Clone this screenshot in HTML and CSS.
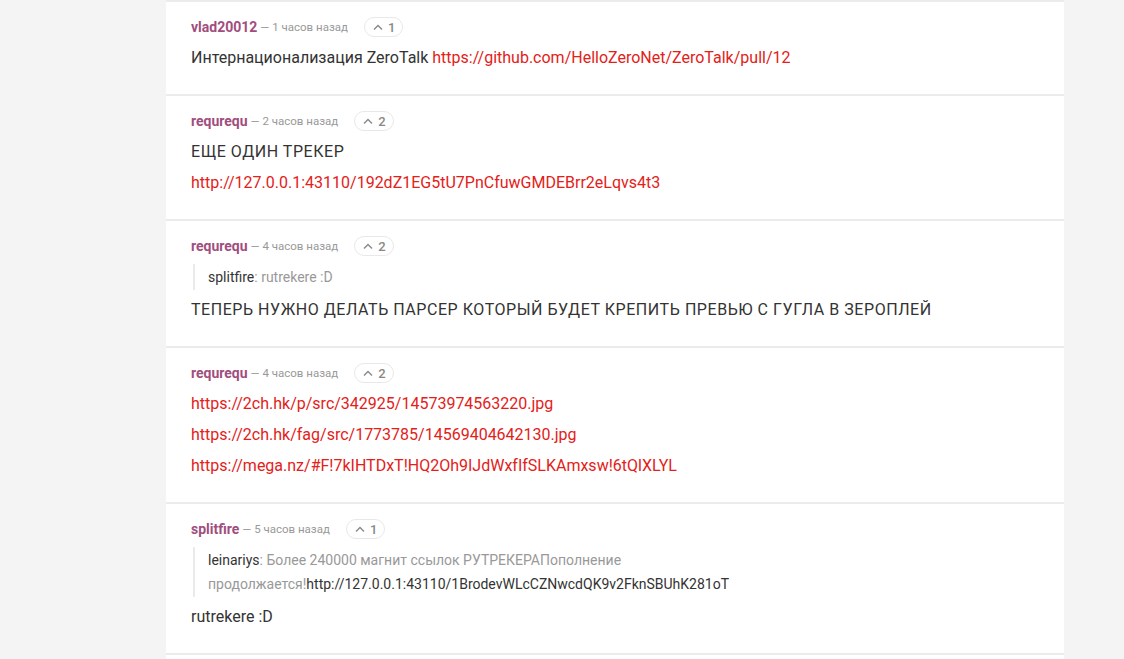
FILE: index.html
```html
<!DOCTYPE html>
<html lang="ru">
<head>
<meta charset="utf-8">
<title>ZeroTalk</title>
<link rel="stylesheet" href="styles.css">
</head>
<body>
<div class="page">
  <div class="comments">
    <div class="comment">
      <div class="head"><a class="user">vlad20012</a><span class="added">— 1 часов назад</span><span class="vote"><svg viewBox="0 0 10 6" class="caret"><path d="M1 5.5 L5 1.5 L9 5.5"/></svg>1</span></div>
      <p>Интернационализация ZeroTalk <a class="link">https://github.com/HelloZeroNet/ZeroTalk/pull/12</a></p>
    </div>
    <div class="comment">
      <div class="head"><a class="user">requrequ</a><span class="added">— 2 часов назад</span><span class="vote"><svg viewBox="0 0 10 6" class="caret"><path d="M1 5.5 L5 1.5 L9 5.5"/></svg>2</span></div>
      <p class="caps">ЕЩЕ ОДИН ТРЕКЕР</p>
      <p><a class="link">http://127.0.0.1:43110/192dZ1EG5tU7PnCfuwGMDEBrr2eLqvs4t3</a></p>
    </div>
    <div class="comment">
      <div class="head"><a class="user">requrequ</a><span class="added">— 4 часов назад</span><span class="vote"><svg viewBox="0 0 10 6" class="caret"><path d="M1 5.5 L5 1.5 L9 5.5"/></svg>2</span></div>
      <blockquote><span class="qname">splitfire</span>: rutrekere :D</blockquote>
      <p class="caps">ТЕПЕРЬ НУЖНО ДЕЛАТЬ ПАРСЕР КОТОРЫЙ БУДЕТ КРЕПИТЬ ПРЕВЬЮ С ГУГЛА В ЗЕРОПЛЕЙ</p>
    </div>
    <div class="comment">
      <div class="head"><a class="user">requrequ</a><span class="added">— 4 часов назад</span><span class="vote"><svg viewBox="0 0 10 6" class="caret"><path d="M1 5.5 L5 1.5 L9 5.5"/></svg>2</span></div>
      <p><a class="link">https://2ch.hk/p/src/342925/14573974563220.jpg</a></p>
      <p><a class="link">https://2ch.hk/fag/src/1773785/14569404642130.jpg</a></p>
      <p><a class="link">https://mega.nz/#F!7kIHTDxT!HQ2Oh9IJdWxfIfSLKAmxsw!6tQlXLYL</a></p>
    </div>
    <div class="comment">
      <div class="head"><a class="user">splitfire</a><span class="added">— 5 часов назад</span><span class="vote"><svg viewBox="0 0 10 6" class="caret"><path d="M1 5.5 L5 1.5 L9 5.5"/></svg>1</span></div>
      <blockquote><span class="qname">leinariys</span>: Более 240000 магнит ссылок РУТРЕКЕРАПополнение продолжается!<span class="qlink">http://127.0.0.1:43110/1BrodevWLcCZNwcdQK9v2FknSBUhK281oT</span></blockquote>
      <p>rutrekere :D</p>
    </div>
    <div class="comment filler"></div>
  </div>
</div>
</body>
</html>
```
FILE: styles.css
```css
html, body {
  margin: 0;
  padding: 0;
  background: #f4f4f4;
  overflow: hidden;
  height: 659px;
}
body {
  font-family: Roboto, "Noto Sans", "Liberation Sans", sans-serif;
  color: #333;
}
.page {
  display: flex;
  justify-content: flex-start;
  padding-left: 166px;
}
.comments {
  width: 898px;
  display: flex;
  flex-direction: column;
  gap: 2px;
  background: #ebebeb;
  padding-top: 2px;
}
.comment {
  background: #fff;
  padding: 15px 25px 21px 25px;
}
.filler {
  height: 40px;
  padding: 0;
}
.head {
  display: flex;
  align-items: center;
  height: 20px;
  margin-bottom: 5px;
  font-size: 11.5px;
}
.user {
  color: #a04e7e;
  font-weight: bold;
  font-size: 14px;
}
.added {
  color: #999;
  margin-left: 3px;
}
.vote {
  display: inline-flex;
  align-items: center;
  gap: 5px;
  height: 18px;
  margin-left: 16px;
  padding: 0 7px 0 8px;
  border: 1px solid #e8e8e8;
  border-radius: 10px;
  color: #888;
  font-size: 13px;
  font-weight: 500;
}
.caret {
  width: 10px;
  height: 6px;
  fill: none;
  stroke: #888;
  stroke-width: 1.4;
}
.comment p {
  margin: 0;
  font-size: 16px;
  line-height: 31px;
}
.comment p.caps {
  letter-spacing: 0.55px;
}
.link {
  color: #e32119;
}
blockquote {
  margin: 8px 0 4px 2px;
  padding: 1px 0 1px 13px;
  border-left: 2px solid #eaeaea;
  font-size: 14px;
  line-height: 24px;
  color: #999;
  max-width: 520px;
}
.qname, .qlink {
  color: #333;
}
```
